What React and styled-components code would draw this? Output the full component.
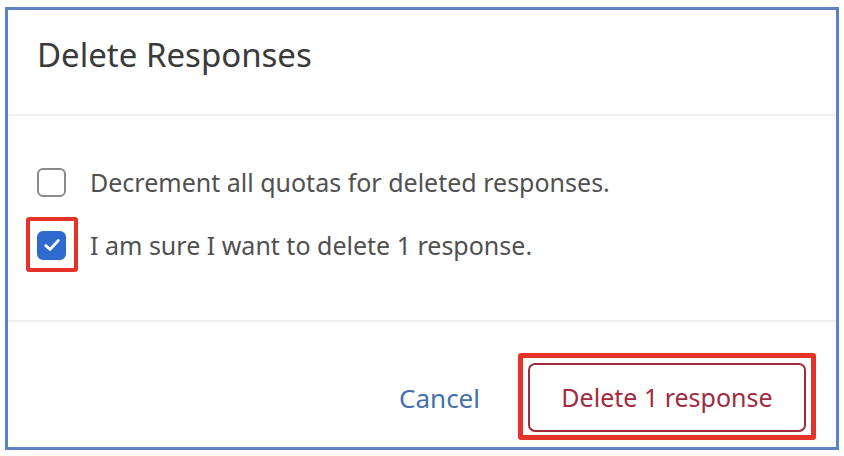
import styled, { createGlobalStyle } from "styled-components";

const GlobalStyle = createGlobalStyle`
  html, body {
    margin: 0;
    padding: 0;
    background: #ffffff;
  }
  body {
    font-family: "Noto Sans", "Open Sans", sans-serif;
    color: #333;
  }
`;

const Frame = styled.div`
  box-sizing: border-box;
  margin: 7px 0 0 5px;
  width: 834px;
  height: 443px;
  border: 3px solid #5b83c1;
  background: #fff;
  display: flex;
  flex-direction: column;
`;

const Header = styled.div`
  height: 106px;
  padding: 0 0 0 29px;
  display: flex;
  align-items: center;
  border-bottom: 2px solid #efefef;
  box-sizing: border-box;
`;

const Title = styled.h2`
  margin: 0;
  font-size: 33px;
  font-weight: 400;
  line-height: 1;
  color: #3a3a3a;
  position: relative;
  top: -8px;
`;

const Body = styled.div`
  height: 206px;
  box-sizing: border-box;
  padding: 50px 0 0 29px;
  display: flex;
  flex-direction: column;
  gap: 31px;
  border-bottom: 2px solid #efefef;
`;

const Row = styled.label`
  height: 32px;
  display: flex;
  align-items: center;
  gap: 24px;
  font-size: 25px;
  line-height: 1;
  color: #505050;
`;

const Box = styled.span`
  position: relative;
  box-sizing: border-box;
  width: 29px;
  height: 29px;
  flex: none;
  border-radius: 6px;
  display: flex;
  align-items: center;
  justify-content: center;
  border: 2px solid ${(p) => (p.checked ? "#2f6bcf" : "#8a8a8a")};
  background: ${(p) => (p.checked ? "#2f6bcf" : "#fff")};
`;

/* red annotation frame drawn over a control */
const Highlight = styled.span`
  position: absolute;
  top: ${(p) => p.$t}px;
  right: ${(p) => p.$r}px;
  bottom: ${(p) => p.$b}px;
  left: ${(p) => p.$l}px;
  border: ${(p) => p.$w}px solid #e5332a;
  border-radius: 3px;
  pointer-events: none;
`;

const Footer = styled.div`
  flex: 1;
  display: flex;
  align-items: flex-start;
  justify-content: flex-end;
  padding: 41px 30px 0 0;
  gap: 48px;
`;

const LinkButton = styled.button`
  border: none;
  background: none;
  font-family: inherit;
  font-size: 26px;
  line-height: 1;
  color: #4271ae;
  padding: 0;
  height: 69px;
`;

const DangerButton = styled.button`
  position: relative;
  box-sizing: border-box;
  width: 278px;
  height: 69px;
  border: 2px solid #9e2a3c;
  border-radius: 7px;
  background: #fff;
  font-family: inherit;
  font-size: 25px;
  line-height: 1;
  color: #a22a3d;
  padding: 0;
`;

const Check = () => (
  <svg width="20" height="20" viewBox="0 0 16 16">
    <path d="M3 8.5 L6.5 11.5 L13 4.5" fill="none" stroke="#fff" strokeWidth="2.3" strokeLinecap="round" strokeLinejoin="round" />
  </svg>
);

const App = () => {
  return (
    <>
      <GlobalStyle />
      <Frame>
        <Header>
          <Title>Delete Responses</Title>
        </Header>
        <Body>
          <Row>
            <Box />
            Decrement all quotas for deleted responses.
          </Row>
          <Row>
            <Box checked>
              <Check />
              <Highlight $t={-16} $r={-14} $b={-14} $l={-13} $w={4} />
            </Box>
            I am sure I want to delete 1 response.
          </Row>
        </Body>
        <Footer>
          <LinkButton>Cancel</LinkButton>
          <DangerButton>
            Delete 1 response
            <Highlight $t={-12} $r={-12} $b={-10} $l={-12} $w={5} />
          </DangerButton>
        </Footer>
      </Frame>
    </>
  );
};

export default App;
